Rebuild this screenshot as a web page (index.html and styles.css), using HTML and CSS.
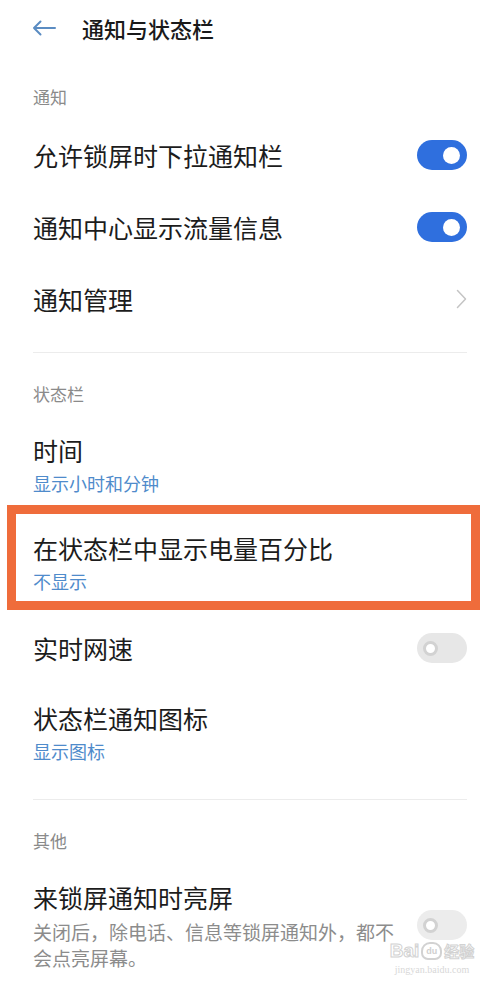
FILE: index.html
```html
<!DOCTYPE html>
<html lang="zh-CN">
<head>
<meta charset="utf-8">
<title>通知与状态栏</title>
<link rel="stylesheet" href="styles.css">
</head>
<body>
<div class="page">
  <header class="topbar">
    <svg class="back" width="24" height="16" viewBox="0 0 24 16">
      <path d="M23 8H2M8.5 1.5L2 8l6.5 6.5" fill="none" stroke="#5b8cc2" stroke-width="2" stroke-linecap="round" stroke-linejoin="round"/>
    </svg>
    <h1 class="title">通知与状态栏</h1>
  </header>

  <section class="group">
    <div class="group-title">通知</div>
    <div class="row single">
      <span class="label">允许锁屏时下拉通知栏</span>
      <span class="switch on"><span class="knob"></span></span>
    </div>
    <div class="row single">
      <span class="label">通知中心显示流量信息</span>
      <span class="switch on"><span class="knob"></span></span>
    </div>
    <div class="row single">
      <span class="label">通知管理</span>
      <svg class="chevron" width="11" height="20" viewBox="0 0 11 20">
        <path d="M1.5 1.5L9.5 10l-8 8.5" fill="none" stroke="#c4c4c4" stroke-width="1.5" stroke-linecap="round" stroke-linejoin="round"/>
      </svg>
    </div>
  </section>

  <div class="divider"></div>

  <section class="group">
    <div class="group-title">状态栏</div>
    <div class="row double">
      <div class="text">
        <div class="label">时间</div>
        <div class="sub">显示小时和分钟</div>
      </div>
    </div>
    <div class="row double highlighted">
      <div class="text">
        <div class="label">在状态栏中显示电量百分比</div>
        <div class="sub">不显示</div>
      </div>
      <div class="mark"></div>
    </div>
    <div class="row single">
      <span class="label">实时网速</span>
      <span class="switch off"><span class="knob"></span></span>
    </div>
    <div class="row double">
      <div class="text">
        <div class="label">状态栏通知图标</div>
        <div class="sub">显示图标</div>
      </div>
    </div>
  </section>

  <div class="divider"></div>

  <section class="group">
    <div class="group-title">其他</div>
    <div class="row double last">
      <div class="text">
        <div class="label">来锁屏通知时亮屏</div>
        <div class="desc">关闭后，除电话、信息等锁屏通知外，都不会点亮屏幕。</div>
      </div>
      <span class="switch off faint"><span class="knob"></span></span>
    </div>
  </section>

  <div class="watermark">
    <div class="wm-logo"><span class="wm-bai">Bai</span><span class="wm-paw">du</span><span class="wm-jy">经验</span></div>
    <div class="wm-url">jingyan.baidu.com</div>
  </div>
</div>
</body>
</html>
```

FILE: styles.css
```css
* { box-sizing: border-box; }

html, body {
  margin: 0;
  padding: 0;
  background: #ffffff;
}

body {
  font-family: "Noto Sans CJK SC", "Noto Sans", sans-serif;
  color: #1c1c1c;
}

.page {
  position: relative;
  width: 500px;
  height: 982px;
  overflow: hidden;
}

.topbar {
  height: 56px;
  display: flex;
  align-items: center;
  padding-left: 32px;
}

.back {
  display: block;
  margin-right: 26px;
}

.title {
  margin: 0;
  font-size: 22px;
  font-weight: 500;
  line-height: 30px;
  color: #1a1a1a;
}

.group-title {
  padding: 30px 33px 11px;
  font-size: 17px;
  line-height: 22px;
  color: #8a8a8a;
}

.row {
  position: relative;
  display: flex;
  align-items: center;
  justify-content: space-between;
  padding: 0 33px;
}

.row.single {
  height: 72px;
}

.row.double {
  padding-top: 16px;
  padding-bottom: 16px;
}

.row.last {
  padding-bottom: 6px;
}

.label {
  font-size: 25px;
  line-height: 36px;
  color: #1c1c1c;
}

.sub {
  font-size: 18px;
  line-height: 30px;
  color: #4f8bcb;
}

.desc {
  margin-top: 4px;
  width: 366px;
  font-size: 19px;
  line-height: 26px;
  color: #8c8c8c;
}

.switch {
  position: relative;
  flex: none;
  width: 50px;
  height: 30px;
  border-radius: 15px;
  display: flex;
  align-items: center;
}

.switch.on {
  background: #2f6fde;
  justify-content: flex-end;
  padding-right: 7px;
}

.switch.on .knob {
  width: 17px;
  height: 17px;
  border-radius: 50%;
  background: #ffffff;
}

.switch.off {
  background: #e7e7e7;
  padding-left: 6px;
}

.switch.off .knob {
  width: 15px;
  height: 15px;
  border-radius: 50%;
  background: #ffffff;
  border: 3px solid #d2d2d2;
}

.switch.faint {
  background: #ececec;
}

.chevron {
  display: block;
  flex: none;
}

.divider {
  height: 1px;
  margin: 17px 33px 0;
  background: #ececec;
}

.mark {
  position: absolute;
  left: 7px;
  top: -9px;
  width: 473px;
  height: 105px;
  border: 9px solid #ef6c3b;
}

.watermark {
  position: absolute;
  left: 386px;
  top: 941px;
  width: 92px;
  color: #e2e2e2;
  text-align: center;
}

.wm-logo {
  display: flex;
  align-items: center;
  justify-content: center;
  gap: 2px;
  font-family: "Liberation Sans", sans-serif;
  font-size: 19px;
  font-weight: bold;
  line-height: 20px;
}

.wm-bai {
  color: #ffffff;
  -webkit-text-stroke: 1px #d2d2d2;
}

.wm-paw {
  display: inline-flex;
  align-items: center;
  justify-content: center;
  width: 21px;
  height: 18px;
  border-radius: 9px 9px 7px 7px;
  border: 2px solid #d2d2d2;
  font-size: 9px;
  line-height: 10px;
  color: #cfcfcf;
}

.wm-jy {
  font-family: "Noto Sans CJK SC", sans-serif;
  font-size: 15px;
  color: #ffffff;
  -webkit-text-stroke: 1px #d2d2d2;
}

.wm-url {
  margin-top: 2px;
  font-family: "Liberation Serif", serif;
  font-size: 10px;
  line-height: 13px;
  color: #d8d8d8;
}
```
